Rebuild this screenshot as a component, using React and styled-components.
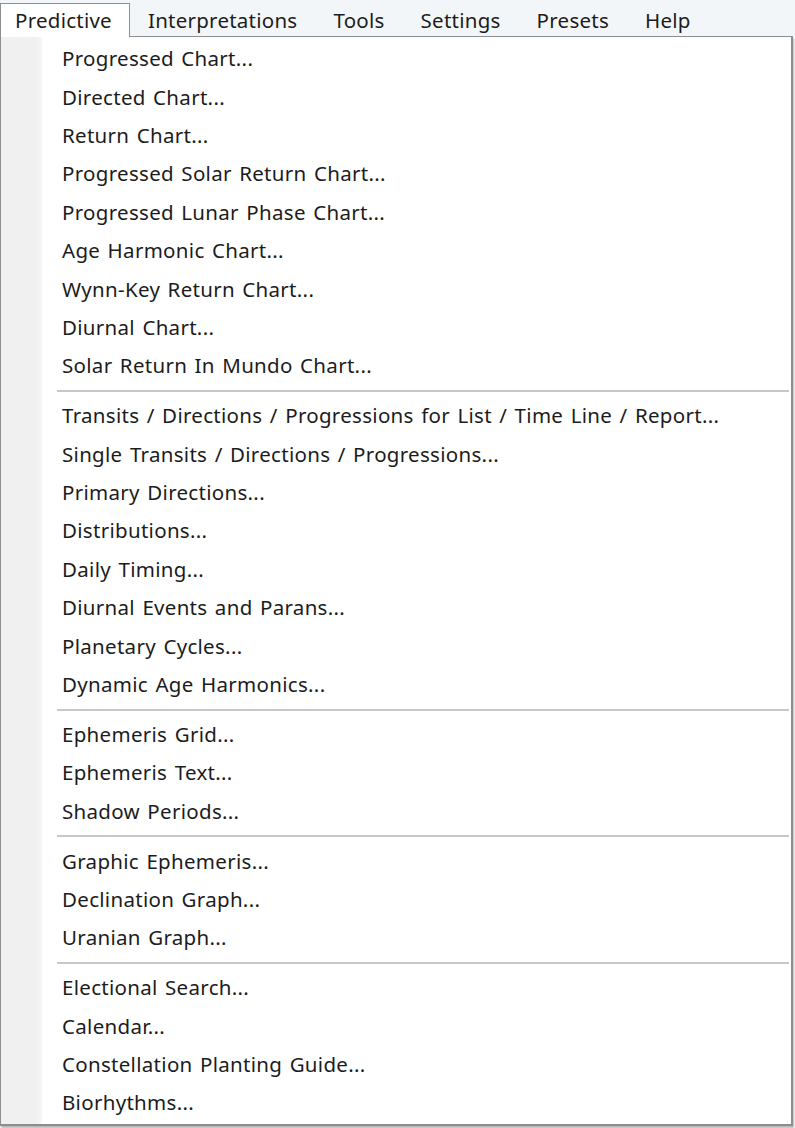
import React from 'react';
import styled, { createGlobalStyle } from 'styled-components';

const topMenus = ['Predictive', 'Interpretations', 'Tools', 'Settings', 'Presets', 'Help'];

const groups = [
  [
    'Progressed Chart...',
    'Directed Chart...',
    'Return Chart...',
    'Progressed Solar Return Chart...',
    'Progressed Lunar Phase Chart...',
    'Age Harmonic Chart...',
    'Wynn-Key Return Chart...',
    'Diurnal Chart...',
    'Solar Return In Mundo Chart...',
  ],
  [
    'Transits / Directions / Progressions for List / Time Line / Report...',
    'Single Transits / Directions / Progressions...',
    'Primary Directions...',
    'Distributions...',
    'Daily Timing...',
    'Diurnal Events and Parans...',
    'Planetary Cycles...',
    'Dynamic Age Harmonics...',
  ],
  ['Ephemeris Grid...', 'Ephemeris Text...', 'Shadow Periods...'],
  ['Graphic Ephemeris...', 'Declination Graph...', 'Uranian Graph...'],
  ['Electional Search...', 'Calendar...', 'Constellation Planting Guide...', 'Biorhythms...'],
];

export default function App() {
  return (
    <>
      <GlobalStyle />
      <Window>
        <MenuBar>
          {topMenus.map((title, index) => (
            <TopItem key={title} $active={index === 0}>
              {title}
            </TopItem>
          ))}
        </MenuBar>
        <Dropdown>
          <Gutter />
          <MenuList>
            {groups.map((group, gi) => (
              <React.Fragment key={gi}>
                {gi > 0 && <Separator />}
                {group.map((item) => (
                  <Item key={item}>{item}</Item>
                ))}
              </React.Fragment>
            ))}
          </MenuList>
        </Dropdown>
      </Window>
    </>
  );
}

const GlobalStyle = createGlobalStyle`
  body {
    margin: 0;
    background: #ffffff;
    font-family: "Noto Sans", "Open Sans", sans-serif;
    color: #1c1c1c;
  }
`;

const Window = styled.div`
  width: 795px;
  height: 1128px;
  overflow: hidden;
  background: #ffffff;
`;

const MenuBar = styled.div`
  display: flex;
  align-items: stretch;
  height: 36px;
  padding-top: 3px;
  box-sizing: border-box;
  background: #f3f6f8;
`;

const TopItem = styled.div`
  display: flex;
  align-items: center;
  padding: 0 17px 1px ${(p) => (p.$active ? '14px' : '17px')};
  font-size: 20.5px;
  letter-spacing: 0.25px;
  position: relative;
  z-index: 1;
  background: ${(p) => (p.$active ? '#ffffff' : 'transparent')};
  border: 1px solid ${(p) => (p.$active ? '#8e8e8e' : 'transparent')};
  border-bottom: none;
  margin-bottom: -1px;
`;

const Dropdown = styled.div`
  display: flex;
  width: 793px;
  box-sizing: border-box;
  border: 1px solid #8e8e8e;
  border-right-width: 2px;
  border-bottom-width: 2px;
  background: #ffffff;
  box-shadow: 1px 2px 2px rgba(0, 0, 0, 0.3);
`;

const Gutter = styled.div`
  width: 41px;
  flex-shrink: 0;
  background: linear-gradient(90deg, #f0f0f0 0%, #f0f0f0 85%, #f7f7f7 100%);
`;

const MenuList = styled.div`
  flex: 1;
  padding: 2px 0 2px;
`;

const Item = styled.div`
  height: 38.4px;
  display: flex;
  align-items: center;
  padding-left: 20px;
  font-size: 20.5px;
  letter-spacing: 0.3px;
  word-spacing: 1.8px;
  white-space: nowrap;
`;

const Separator = styled.div`
  height: 2px;
  margin: 5.5px 2px 4px 15px;
  background: #c8c8c8;
`;
